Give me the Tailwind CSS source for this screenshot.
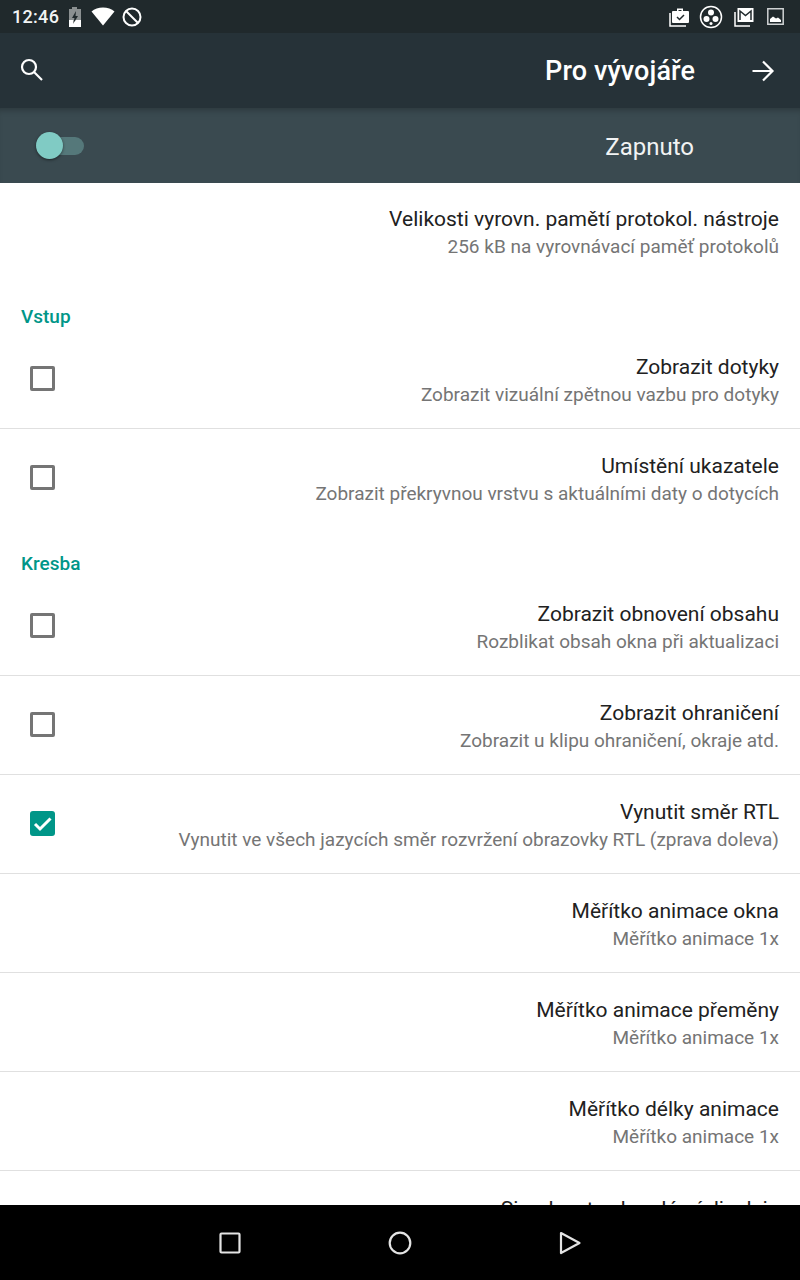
<!DOCTYPE html>
<html lang="cs">
<head>
  <meta charset="UTF-8">
  <meta name="viewport" content="width=device-width, initial-scale=1.0">
  <title>Pro vývojáře</title>
  <script src="https://cdn.jsdelivr.net/npm/@tailwindcss/browser@4"></script>
</head>
<body class="bg-white font-['Roboto',sans-serif]">
<div class="w-[800px] h-[1280px] overflow-hidden flex flex-col relative">

  <!-- status bar -->
  <div class="h-[33px] shrink-0 bg-[#20292c] flex items-center justify-between text-white pl-[12px] pr-[16px]">
    <div class="flex items-center">
      <span class="text-[18px] font-medium tracking-[0.3px] text-[#f2f4f4] w-[48px]">12:46</span>
      <svg class="ml-[8px]" width="14" height="20" viewBox="0 0 14 20"><path d="M4 0h5v2h4v18H1V2h3z" fill="#8b9091"/><path d="M1 13h4.500L5 15l3-2h5v7H1z" fill="#fff"/><path d="M8 4 4 11h2.500L5 17l5-8H7.500z" fill="#20292c"/></svg>
      <svg class="ml-[9px]" width="24" height="19" viewBox="0 0 24 19"><path d="M12 18.500 0.500 4.500C3.500 2 7.500 0.500 12 0.500S20.500 2 23.500 4.500z" fill="#fff"/></svg>
      <svg class="ml-[7px]" width="20" height="20" viewBox="0 0 20 20" fill="none" stroke="#fff" stroke-width="2"><circle cx="10" cy="10" r="8.500"/><path d="M4 4l12 12"/></svg>
    </div>
    <div class="flex items-center">
      <svg width="22" height="20" viewBox="0 0 22 20"><path d="M1 6v13h16" fill="none" stroke="#fff" stroke-width="1.500"/><path d="M4 4h4V1.500h6V4h5q1 0 1 1v10q0 1-1 1H4q-1 0-1-1V5q0-1 1-1z" fill="#fff"/><path d="M9.500 3h3V4h-3z" fill="#20292c"/><path d="M8 10l2.500 2.500L15 8" fill="none" stroke="#20292c" stroke-width="1.500"/></svg>
      <svg class="ml-[8px]" width="24" height="24" viewBox="0 0 24 24"><circle cx="12" cy="12" r="10.500" fill="none" stroke="#fff" stroke-width="1.500"/><circle cx="12" cy="7.500" r="3" fill="#fff"/><circle cx="7.500" cy="14" r="3" fill="#fff"/><circle cx="16.500" cy="14" r="3" fill="#fff"/><circle cx="12" cy="18.500" r="1.500" fill="#fff"/></svg>
      <svg class="ml-[11px]" width="20" height="20" viewBox="0 0 20 20"><path d="M1 5v14h15" fill="none" stroke="#fff" stroke-width="1.500"/><path d="M3.500 1h16v14h-16z" fill="#fff"/><path d="M6 13V4l5.500 4.500L17 4v9" fill="none" stroke="#20292c" stroke-width="1.500"/></svg>
      <svg class="ml-[13px]" width="17" height="17" viewBox="0 0 17 17"><path d="M0.800 0.800h15.400v15.400H0.800z" fill="#20292c" stroke="#cfd2d3" stroke-width="1.500"/><path d="M3 14v-3l3-2.500 3 2 2-1 3 2.500v2z" fill="#fff"/></svg>
    </div>
  </div>

  <!-- toolbar -->
  <div class="h-[75px] shrink-0 bg-[#263238] flex items-center justify-between text-white pl-[19px] pr-[25px]">
    <svg class="-mt-[2px]" width="25" height="25" viewBox="0 0 25 25" fill="none" stroke="#fff" stroke-width="2.200"><circle cx="10" cy="10" r="7"/><path d="M15 15l8 8"/></svg>
    <div class="flex items-center">
      <span class="text-[27px] font-medium mt-[2px] tracking-[0.1px]">Pro vývojáře</span>
      <svg class="ml-[56px]" width="24" height="22" viewBox="0 0 24 22" fill="none" stroke="#fff" stroke-width="2.200"><path d="M1.500 11h20M12 1.500l9.500 9.500-9.500 9.500"/></svg>
    </div>
  </div>

  <!-- master switch -->
  <div class="h-[75px] shrink-0 bg-[#3a4a50] shadow-[inset_0_6px_6px_-4px_rgba(0,0,0,0.25)] flex items-center justify-between pl-[37px] pr-[106px]">
    <div class="relative w-[47px] h-[18px] rounded-full bg-[#55787a]">
      <div class="absolute -left-[1px] -top-[5px] w-[27px] h-[27px] rounded-full bg-[#80cbc4] shadow-[0_1px_3px_rgba(0,0,0,0.5)]"></div>
    </div>
    <span class="text-[24px] text-[#f1f3f3] mt-[3px]">Zapnuto</span>
  </div>

  <!-- list -->
  <div class="flex-1 overflow-hidden text-right">
    <div class="h-[98px] pt-[22px] pr-[21px]">
      <div class="text-[21px] leading-[28px] text-[#212121]">Velikosti vyrovn. pamětí protokol. nástroje</div>
      <div class="text-[19px] leading-[27px] text-[#757575]">256 kB na vyrovnávací paměť protokolů</div>
    </div>

    <div class="h-[49px] pt-[24px] pl-[21px] text-left text-[19px] leading-[24px] font-medium text-[#009688]">Vstup</div>
    <div class="h-[99px] border-b border-[#e0e0e0] flex items-center justify-between pl-[30px] pr-[21px]">
      <span class="w-[25px] h-[25px] -mt-[2px] rounded-[2px] border-[3px] border-[#757575]"></span>
      <div class="mt-[2px]"><div class="text-[21px] leading-[28px] text-[#212121]">Zobrazit dotyky</div><div class="text-[19px] leading-[27px] text-[#757575]">Zobrazit vizuální zpětnou vazbu pro dotyky</div></div>
    </div>
    <div class="h-[99px] flex items-center justify-between pl-[30px] pr-[21px]">
      <span class="w-[25px] h-[25px] -mt-[2px] rounded-[2px] border-[3px] border-[#757575]"></span>
      <div class="mt-[2px]"><div class="text-[21px] leading-[28px] text-[#212121]">Umístění ukazatele</div><div class="text-[19px] leading-[27px] text-[#757575]">Zobrazit překryvnou vrstvu s aktuálními daty o dotycích</div></div>
    </div>

    <div class="h-[49px] pt-[24px] pl-[21px] text-left text-[19px] leading-[24px] font-medium text-[#009688]">Kresba</div>
    <div class="h-[99px] border-b border-[#e0e0e0] flex items-center justify-between pl-[30px] pr-[21px]">
      <span class="w-[25px] h-[25px] -mt-[2px] rounded-[2px] border-[3px] border-[#757575]"></span>
      <div class="mt-[2px]"><div class="text-[21px] leading-[28px] text-[#212121]">Zobrazit obnovení obsahu</div><div class="text-[19px] leading-[27px] text-[#757575]">Rozblikat obsah okna při aktualizaci</div></div>
    </div>
    <div class="h-[99px] border-b border-[#e0e0e0] flex items-center justify-between pl-[30px] pr-[21px]">
      <span class="w-[25px] h-[25px] -mt-[2px] rounded-[2px] border-[3px] border-[#757575]"></span>
      <div class="mt-[2px]"><div class="text-[21px] leading-[28px] text-[#212121]">Zobrazit ohraničení</div><div class="text-[19px] leading-[27px] text-[#757575]">Zobrazit u klipu ohraničení, okraje atd.</div></div>
    </div>
    <div class="h-[99px] border-b border-[#e0e0e0] flex items-center justify-between pl-[30px] pr-[21px]">
      <svg class="-mt-[2px]" width="25" height="25" viewBox="0 0 25 25"><rect width="25" height="25" rx="3" fill="#009688"/><path d="M5 13l5 5L20.500 7.500" fill="none" stroke="#fff" stroke-width="3"/></svg>
      <div class="mt-[2px]"><div class="text-[21px] leading-[28px] text-[#212121]">Vynutit směr RTL</div><div class="text-[19px] leading-[27px] text-[#757575]">Vynutit ve všech jazycích směr rozvržení obrazovky RTL (zprava doleva)</div></div>
    </div>
    <div class="h-[99px] border-b border-[#e0e0e0] flex items-center justify-end pr-[21px]">
      <div class="mt-[2px]"><div class="text-[21px] leading-[28px] text-[#212121]">Měřítko animace okna</div><div class="text-[19px] leading-[27px] text-[#757575]">Měřítko animace 1x</div></div>
    </div>
    <div class="h-[99px] border-b border-[#e0e0e0] flex items-center justify-end pr-[21px]">
      <div class="mt-[2px]"><div class="text-[21px] leading-[28px] text-[#212121]">Měřítko animace přeměny</div><div class="text-[19px] leading-[27px] text-[#757575]">Měřítko animace 1x</div></div>
    </div>
    <div class="h-[99px] border-b border-[#e0e0e0] flex items-center justify-end pr-[21px]">
      <div class="mt-[2px]"><div class="text-[21px] leading-[28px] text-[#212121]">Měřítko délky animace</div><div class="text-[19px] leading-[27px] text-[#757575]">Měřítko animace 1x</div></div>
    </div>
    <div class="pt-[24px] pr-[21px] text-[21px] leading-[28px] text-[#212121]">Simulovat sekundární displeje</div>
  </div>

  <!-- nav bar -->
  <div class="h-[75px] shrink-0 bg-black flex items-center justify-center relative z-10">
    <div class="w-[362px] flex items-center justify-between">
      <svg width="22" height="22" viewBox="0 0 22 22" fill="none" stroke="#e4e4e4" stroke-width="2.200"><rect x="1.500" y="1.500" width="19" height="19" rx="1"/></svg>
      <svg width="24" height="24" viewBox="0 0 24 24" fill="none" stroke="#e4e4e4" stroke-width="2.200"><circle cx="12" cy="12" r="10.300"/></svg>
      <svg width="22" height="24" viewBox="0 0 22 24" fill="none" stroke="#e4e4e4" stroke-width="2.200" stroke-linejoin="round"><path d="M2 2l18.500 10L2 22z"/></svg>
    </div>
  </div>
</div>
</body>
</html>
